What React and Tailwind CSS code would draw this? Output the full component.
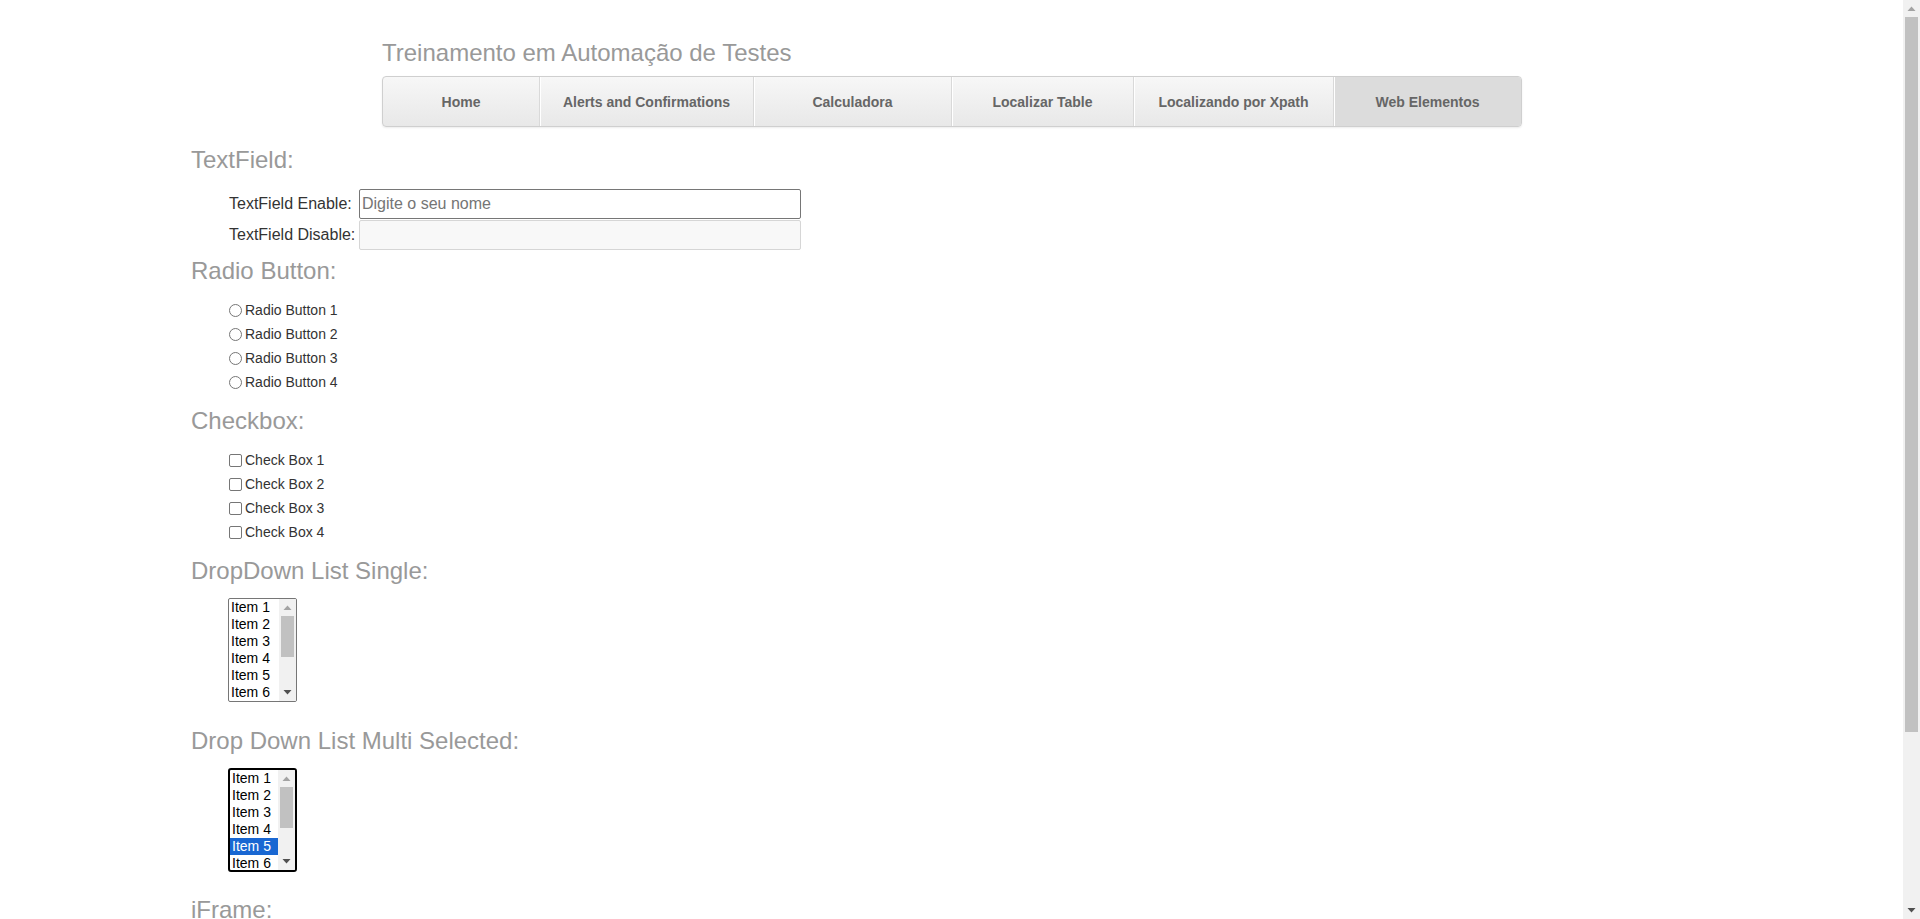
const tabs = [
  { label: "Home", w: "w-[156px]" },
  { label: "Alerts and Confirmations", w: "w-[214px]" },
  { label: "Calculadora", w: "w-[198px]" },
  { label: "Localizar Table", w: "w-[182px]" },
  { label: "Localizando por Xpath", w: "w-[200px]" },
  { label: "Web Elementos", w: "w-[188px]", active: true },
];

function Heading({ children, className = "" }) {
  return (
    <h2 className={`text-[24px] leading-[30px] font-normal text-[#999] ${className}`}>
      {children}
    </h2>
  );
}

function Radio({ label }) {
  return (
    <div className="flex h-[24px] items-center">
      <span className="box-border h-[13px] w-[13px] rounded-full border border-[#767676] bg-white" />
      <span className="ml-[3px] text-[14px] text-[#333]">{label}</span>
    </div>
  );
}

function Check({ label }) {
  return (
    <div className="flex h-[24px] items-center">
      <span className="box-border h-[13px] w-[13px] rounded-[2px] border border-[#767676] bg-white" />
      <span className="ml-[3px] text-[14px] text-[#333]">{label}</span>
    </div>
  );
}

function ArrowUp({ color }) {
  return (
    <svg width="9" height="5" viewBox="0 0 9 5">
      <polygon points="0.5,5 4.5,0.5 8.5,5" fill={color} />
    </svg>
  );
}

function ArrowDown({ color }) {
  return (
    <svg width="9" height="5" viewBox="0 0 9 5">
      <polygon points="0.5,0 8.5,0 4.5,4.5" fill={color} />
    </svg>
  );
}

function ListBox({ focused = false, selected = null }) {
  const items = [1, 2, 3, 4, 5, 6];
  return (
    <div
      className={
        focused
          ? "ml-[37px] box-border flex h-[104px] w-[69px] overflow-hidden rounded-[3px] border-2 border-black bg-white"
          : "ml-[37px] box-border flex h-[104px] w-[69px] overflow-hidden rounded-[2px] border border-[#767676] bg-white"
      }
    >
      <div className="flex-1 overflow-hidden">
        {items.map((i) => (
          <div
            key={i}
            className={
              i === selected
                ? "h-[17px] bg-[#1967d2] pl-[2px] text-[14px] leading-[17px] text-white"
                : "h-[17px] pl-[2px] text-[14px] leading-[17px] text-black"
            }
          >
            Item {i}
          </div>
        ))}
      </div>
      <div className="flex w-[17px] flex-col bg-[#f1f1f1]">
        <div className="flex h-[17px] items-center justify-center">
          <ArrowUp color="#a3a3a3" />
        </div>
        <div className="mx-[2px] h-[41px] bg-[#c1c1c1]" />
        <div className="flex-1" />
        <div className="flex h-[17px] items-center justify-center">
          <ArrowDown color="#505050" />
        </div>
      </div>
    </div>
  );
}

function PageScrollbar() {
  return (
    <div className="flex h-[919px] w-[17px] shrink-0 flex-col bg-[#f1f1f1]">
      <div className="flex h-[17px] items-center justify-center">
        <ArrowUp color="#a3a3a3" />
      </div>
      <div className="mx-[2px] h-[715px] bg-[#c1c1c1]" />
      <div className="flex-1" />
      <div className="flex h-[17px] items-center justify-center">
        <ArrowDown color="#505050" />
      </div>
    </div>
  );
}

export default function App() {
  return (
    <div className="flex h-[919px] overflow-hidden bg-white font-['Liberation_Sans',Arial,sans-serif] text-[#333]">
      <div className="w-[1903px] shrink-0 overflow-hidden">
        <header className="ml-[382px] w-[1140px] pt-[38px]">
          <div className="text-[24px] leading-[30px] text-[#999]">
            Treinamento em Automação de Testes
          </div>
          <nav className="mt-[8px] box-border flex h-[51px] overflow-hidden rounded-[4px] border border-[#cfcfcf] bg-linear-to-b from-[#f7f7f7] to-[#e8e8e8] shadow-[0_1px_2px_rgba(0,0,0,0.08)]">
            {tabs.map((t, idx) => (
              <div
                key={t.label}
                className={`${t.w} flex h-full items-center justify-center pt-[2px] text-[14px] font-bold text-[#666] ${
                  idx > 0 ? "border-l border-[#d9d9d9] shadow-[inset_1px_0_0_#ffffff]" : ""
                } ${t.active ? "bg-[#dcdcdc] shadow-[inset_0_2px_4px_rgba(0,0,0,0.12)]" : ""}`}
              >
                {t.label}
              </div>
            ))}
          </nav>
        </header>

        <main className="pl-[191px]">
          <Heading className="mt-[18px]">TextField:</Heading>
          <div className="ml-[38px] mt-[14px] flex flex-col gap-[1px]">
            <div className="flex h-[30px] items-center">
              <label className="w-[130px] text-[16px] leading-[18px] text-[#333]">
                TextField Enable:
              </label>
              <input
                type="text"
                placeholder="Digite o seu nome"
                className="box-border h-[30px] w-[442px] rounded-[2px] border border-[#767676] bg-white px-[2px] text-[16px] text-black outline-none placeholder:text-[#757575]"
              />
            </div>
            <div className="flex h-[30px] items-center">
              <label className="w-[130px] text-[16px] leading-[18px] text-[#333]">
                TextField Disable:
              </label>
              <input
                type="text"
                disabled
                className="box-border h-[30px] w-[442px] rounded-[2px] border border-[#d6d6d6] bg-[#f8f8f8] px-[2px] text-[16px]"
              />
            </div>
          </div>

          <Heading className="mt-[6px]">Radio Button:</Heading>
          <div className="ml-[38px] mt-[12px] flex flex-col">
            <Radio label="Radio Button 1" />
            <Radio label="Radio Button 2" />
            <Radio label="Radio Button 3" />
            <Radio label="Radio Button 4" />
          </div>

          <Heading className="mt-[12px]">Checkbox:</Heading>
          <div className="ml-[38px] mt-[12px] flex flex-col">
            <Check label="Check Box 1" />
            <Check label="Check Box 2" />
            <Check label="Check Box 3" />
            <Check label="Check Box 4" />
          </div>

          <Heading className="mt-[12px]">DropDown List Single:</Heading>
          <div className="mt-[12px]">
            <ListBox />
          </div>

          <Heading className="mt-[24px]">Drop Down List Multi Selected:</Heading>
          <div className="mt-[12px]">
            <ListBox focused selected={5} />
          </div>

          <Heading className="mt-[23px]">iFrame:</Heading>
          <div className="ml-[37px] mt-[12px] box-border h-[180px] w-[500px] border-2 border-[#767676] bg-white" />
        </main>
      </div>
      <PageScrollbar />
    </div>
  );
}
